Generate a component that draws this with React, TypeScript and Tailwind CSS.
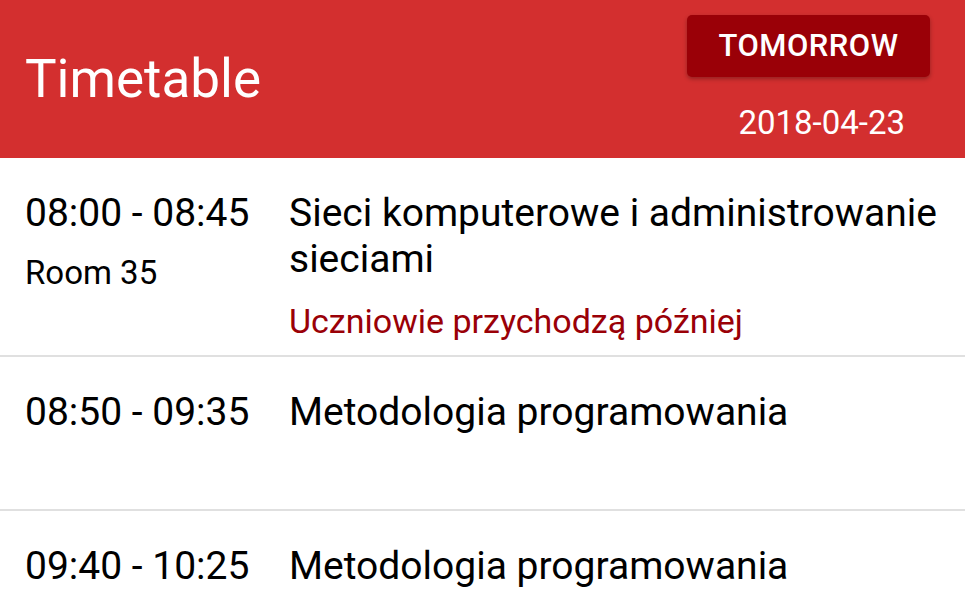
const lessons = [
  {
    time: "08:00 - 08:45",
    room: "Room 35",
    subject: "Sieci komputerowe i administrowanie sieciami",
    note: "Uczniowie przychodzą później",
  },
  {
    time: "08:50 - 09:35",
    room: "",
    subject: "Metodologia programowania",
    note: "",
  },
  {
    time: "09:40 - 10:25",
    room: "",
    subject: "Metodologia programowania",
    note: "",
  },
];

const App = () => {
  return (
    <div className="w-[965px] h-[592px] overflow-hidden bg-white font-['Roboto',sans-serif]">
      {/* Toolbar */}
      <header className="flex justify-between h-[158px] bg-[#d32f2f] pl-[25px] pr-[35px]">
        <h1 className="self-center text-[53px] leading-[64px] text-white font-normal">
          Timetable
        </h1>
        <div className="flex flex-col items-end pt-[15px]">
          <button className="w-[243px] h-[62px] rounded-[5px] bg-[#9a0007] text-white text-[31px] font-medium tracking-[0.5px] shadow-[0_2px_4px_rgba(0,0,0,0.3)]">
            TOMORROW
          </button>
          <span className="mt-[26px] mr-[25px] text-[33px] leading-[39px] text-white">
            2018-04-23
          </span>
        </div>
      </header>

      {/* Lessons */}
      <div className="flex flex-col">
        {lessons.map((l, i) => (
          <div
            key={i}
            className={`flex border-b-2 border-[#e0e0e0] pl-[25px] pr-[20px] pt-[32px] ${
              i === 0 ? "h-[199px]" : "h-[154px]"
            }`}
          >
            <div className="w-[264px] shrink-0 flex flex-col">
              <span className="text-[39px] leading-[46px] text-black">{l.time}</span>
              {l.room && (
                <span className="mt-[17px] text-[33px] leading-[40px] text-black">
                  {l.room}
                </span>
              )}
            </div>
            <div className="flex-1 flex flex-col">
              <span className="text-[39px] leading-[46px] text-black">{l.subject}</span>
              {l.note && (
                <span className="mt-[19px] text-[34px] leading-[40px] text-[#9a0007]">
                  {l.note}
                </span>
              )}
            </div>
          </div>
        ))}
      </div>
    </div>
  );
};

export default App;
